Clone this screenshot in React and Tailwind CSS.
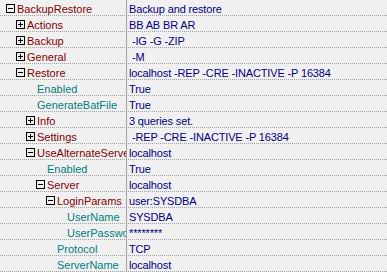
import React from 'react';

const rows = [
  { name: 'BackupRestore', value: 'Backup and restore', level: 0, kind: 'open' },
  { name: 'Actions', value: 'BB AB BR AR', level: 1, kind: 'closed' },
  { name: 'Backup', value: ' -IG -G -ZIP', level: 1, kind: 'closed' },
  { name: 'General', value: ' -M', level: 1, kind: 'closed' },
  { name: 'Restore', value: 'localhost -REP -CRE -INACTIVE -P 16384', level: 1, kind: 'open' },
  { name: 'Enabled', value: 'True', level: 2, kind: 'leaf' },
  { name: 'GenerateBatFile', value: 'True', level: 2, kind: 'leaf' },
  { name: 'Info', value: '3 queries set.', level: 2, kind: 'closed' },
  { name: 'Settings', value: ' -REP -CRE -INACTIVE -P 16384', level: 2, kind: 'closed' },
  { name: 'UseAlternateServer', value: 'localhost', level: 2, kind: 'open' },
  { name: 'Enabled', value: 'True', level: 3, kind: 'leaf' },
  { name: 'Server', value: 'localhost', level: 3, kind: 'open' },
  { name: 'LoginParams', value: 'user:SYSDBA', level: 4, kind: 'open' },
  { name: 'UserName', value: 'SYSDBA', level: 5, kind: 'leaf' },
  { name: 'UserPassword', value: '********', level: 5, kind: 'leaf' },
  { name: 'Protocol', value: 'TCP', level: 4, kind: 'leaf' },
  { name: 'ServerName', value: 'localhost', level: 4, kind: 'leaf' },
];

const indent = ['pl-[6px]', 'pl-[16px]', 'pl-[26px]', 'pl-[36px]', 'pl-[46px]', 'pl-[56px]'];

const Expander = ({ open }) => (
  <div className="relative w-[9px] h-[9px] mt-[4px] border border-black shrink-0">
    <div className="absolute left-[1px] top-[3px] w-[5px] h-px bg-black" />
    {!open && <div className="absolute left-[3px] top-[1px] w-px h-[5px] bg-black" />}
  </div>
);

export default function App() {
  return (
    <div
      className="w-[387px] h-[272px] bg-[#f0f0f0] overflow-hidden text-[11px]"
      style={{ fontFamily: '"Liberation Sans", Arial, sans-serif' }}
    >
      {rows.map((row, i) => (
        <div key={i} className="flex h-4 border-b border-dotted border-[#a0a0a0]">
          <div className={`flex w-[127px] h-[15px] shrink-0 overflow-hidden border-r border-[#a0a0a0] ${indent[row.level]}`}>
            {row.kind === 'leaf' ? (
              <div className="w-[11px] shrink-0" />
            ) : (
              <>
                <Expander open={row.kind === 'open'} />
                <div className="w-[2px] shrink-0" />
              </>
            )}
            <span
              className={`whitespace-nowrap leading-[18px] ${row.kind === 'leaf' ? 'text-[#008080]' : 'text-[#800000]'}`}
            >
              {row.name}
            </span>
          </div>
          <div className="flex-1 h-[15px] overflow-hidden pl-[2px]">
            <span className="whitespace-pre leading-[18px] tracking-[-0.15px] text-[#000080]">
              {row.value}
            </span>
          </div>
        </div>
      ))}
    </div>
  );
}
